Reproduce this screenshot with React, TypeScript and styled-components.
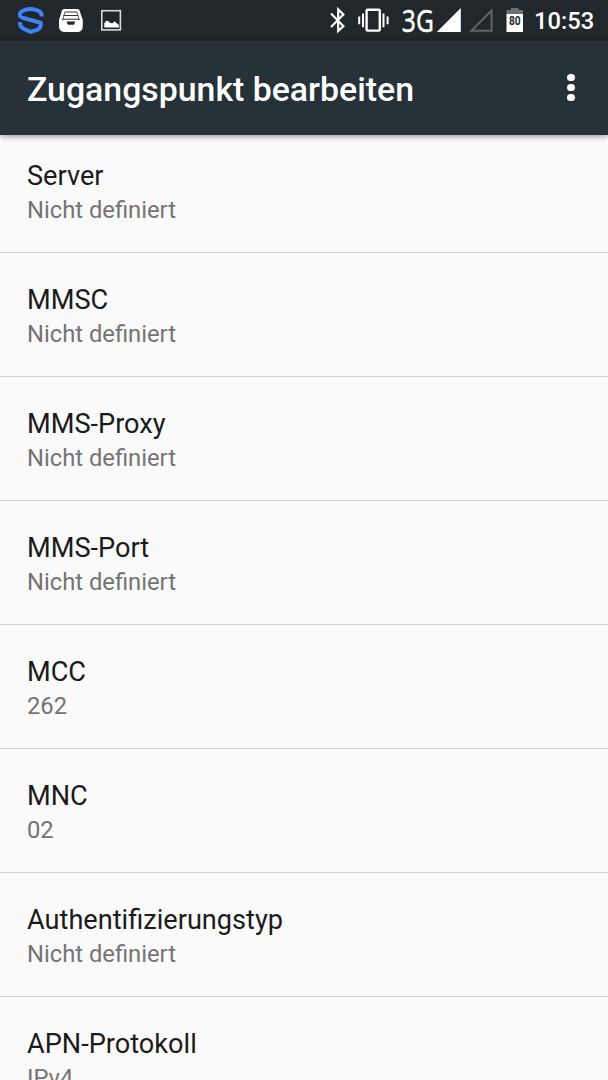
import React from 'react';
import styled, { createGlobalStyle } from 'styled-components';

const GlobalStyle = createGlobalStyle`
  * { box-sizing: border-box; }
  body { margin: 0; background: #fafafa; font-family: Roboto, sans-serif; }
`;

const Screen = styled.div`
  height: 1080px;
  overflow: hidden;
  display: flex;
  flex-direction: column;
  background: #fafafa;
`;

const StatusBar = styled.div`
  height: 41px;
  flex: none;
  display: flex;
  justify-content: space-between;
  background: #21272b;
`;

const IconStrip = styled.svg`
  display: block;
  height: 41px;
`;

const StatusRight = styled.div`
  display: flex;
`;

const Clock = styled.span`
  width: 74px;
  padding-top: 1px;
  font-size: 23.7px;
  line-height: 41px;
  font-weight: 500;
  color: #fff;
`;

const Toolbar = styled.header`
  height: 94px;
  flex: none;
  display: flex;
  align-items: center;
  justify-content: space-between;
  padding: 0 27px;
  background: #263238;
  box-shadow: 0 1px 6px rgba(0, 0, 0, 0.45);
  z-index: 1;
`;

const Title = styled.h1`
  margin: 0;
  padding-top: 3px;
  font-size: 33.83px;
  line-height: 40px;
  font-weight: 500;
  color: #fff;
`;

const MenuButton = styled.button`
  display: flex;
  flex-direction: column;
  gap: 3px;
  margin: 0 6.5px 1px 0;
  padding: 0;
  border: 0;
  background: none;
`;

const Dot = styled.span`
  width: 7.2px;
  height: 7.2px;
  border-radius: 50%;
  background: #fff;
`;

const List = styled.main`
  flex: none;
  margin-top: -6px;
`;

const Row = styled.div`
  height: 124px;
  padding: 30px 27px 0;
  border-bottom: 1px solid #d3d3d3;
`;

const Label = styled.div`
  font-size: 27.15px;
  line-height: 34px;
  color: #1b1b1b;
`;

const Value = styled.div`
  font-size: 23.75px;
  line-height: 34px;
  color: #747474;
`;

const entries = [
  ['Server', 'Nicht definiert'],
  ['MMSC', 'Nicht definiert'],
  ['MMS-Proxy', 'Nicht definiert'],
  ['MMS-Port', 'Nicht definiert'],
  ['MCC', '262'],
  ['MNC', '02'],
  ['Authentifizierungstyp', 'Nicht definiert'],
  ['APN-Protokoll', 'IPv4'],
];

const NotificationIcons = () => (
  <IconStrip width="140" viewBox="0 0 140 41">
    <path d="M41.8 16.5 Q42 12.6 38.8 11 Q30.5 7.2 22.4 11 Q19.4 12.6 19.9 15.6 Q20.2 17 22.5 17.7 L40.8 22.8 Q41.5 27.6 37.5 29.6 L30.6 31.8 L23.2 28.6 Q19.8 26.5 19.8 22" fill="none" stroke="#3f83f8" strokeWidth="4" strokeLinejoin="round" />
    <path d="M64 9 H77.5 Q79 9 79.6 10.5 L82.8 20 V26 Q82.8 32 77 32 H65 Q59 32 59 26 V20 L62 10.5 Q62.6 9 64 9 Z" fill="#fff" />
    <path d="M64.8 12 H77 M63.6 15.5 H78.2 M62.3 19.2 H79.5" stroke="#343a3d" strokeWidth="1.1" />
    <path d="M62.5 20.2 L65 12 M79.3 20.2 L76.8 12" stroke="#343a3d" strokeWidth="0.8" />
    <path d="M66.5 21.6 H75.2 L74 24.8 H68 Z" fill="#21272b" />
    <rect x="101.8" y="10.7" width="18.6" height="19.2" fill="none" stroke="#dadada" strokeWidth="1.6" />
    <path d="M104.3 27.5 V23.3 L106.3 20.8 L108 21 L110.3 23 L112.5 23.2 L114.3 21.6 L116 22.5 L118.8 25 V27.5 Z" fill="#fff" />
  </IconStrip>
);

const SystemIcons = () => (
  <IconStrip width="208" viewBox="326 0 208 41">
    <path d="M331 13.6 L343.4 26.2 L338.2 31 V9.4 L343.4 14.4 L331 27" fill="none" stroke="#fff" strokeWidth="2.2" />
    <rect x="366.6" y="9.8" width="13.2" height="20.8" rx="1" fill="none" stroke="#fff" strokeWidth="2.4" />
    <path d="M363 13.5 V27.3 M383.5 13.5 V27.3 M359.2 16.5 V24.3 M387.6 16.5 V24.3" stroke="#fff" strokeWidth="2" />
    <text x="401.8" y="31.6" fontFamily="'Noto Sans', sans-serif" fontSize="30" textLength="32" lengthAdjust="spacingAndGlyphs" fill="#fff" stroke="#fff" strokeWidth="0.4">3G</text>
    <path d="M460.8 8 V32 H436.8 Z" fill="#fff" />
    <path d="M491.6 10.5 V30.7 H471.5 Z" fill="none" stroke="#5f6466" strokeWidth="2" />
    <path d="M511 8 H518.5 V10 H523 V14 H506.5 V10 H511 Z" fill="#6c7072" />
    <path d="M506.5 14 H523 V32 H506.5 Z" fill="#fff" />
    <text x="509" y="24.6" fontFamily="Roboto, sans-serif" fontSize="12" fontWeight="700" textLength="11.6" lengthAdjust="spacingAndGlyphs" fill="#21272b">80</text>
  </IconStrip>
);

export default function App() {
  return (
    <Screen>
      <GlobalStyle />
      <StatusBar>
        <NotificationIcons />
        <StatusRight>
          <SystemIcons />
          <Clock>10:53</Clock>
        </StatusRight>
      </StatusBar>
      <Toolbar>
        <Title>Zugangspunkt bearbeiten</Title>
        <MenuButton aria-label="Menü">
          <Dot />
          <Dot />
          <Dot />
        </MenuButton>
      </Toolbar>
      <List>
        {entries.map(([label, value]) => (
          <Row key={label}>
            <Label>{label}</Label>
            <Value>{value}</Value>
          </Row>
        ))}
      </List>
    </Screen>
  );
}
